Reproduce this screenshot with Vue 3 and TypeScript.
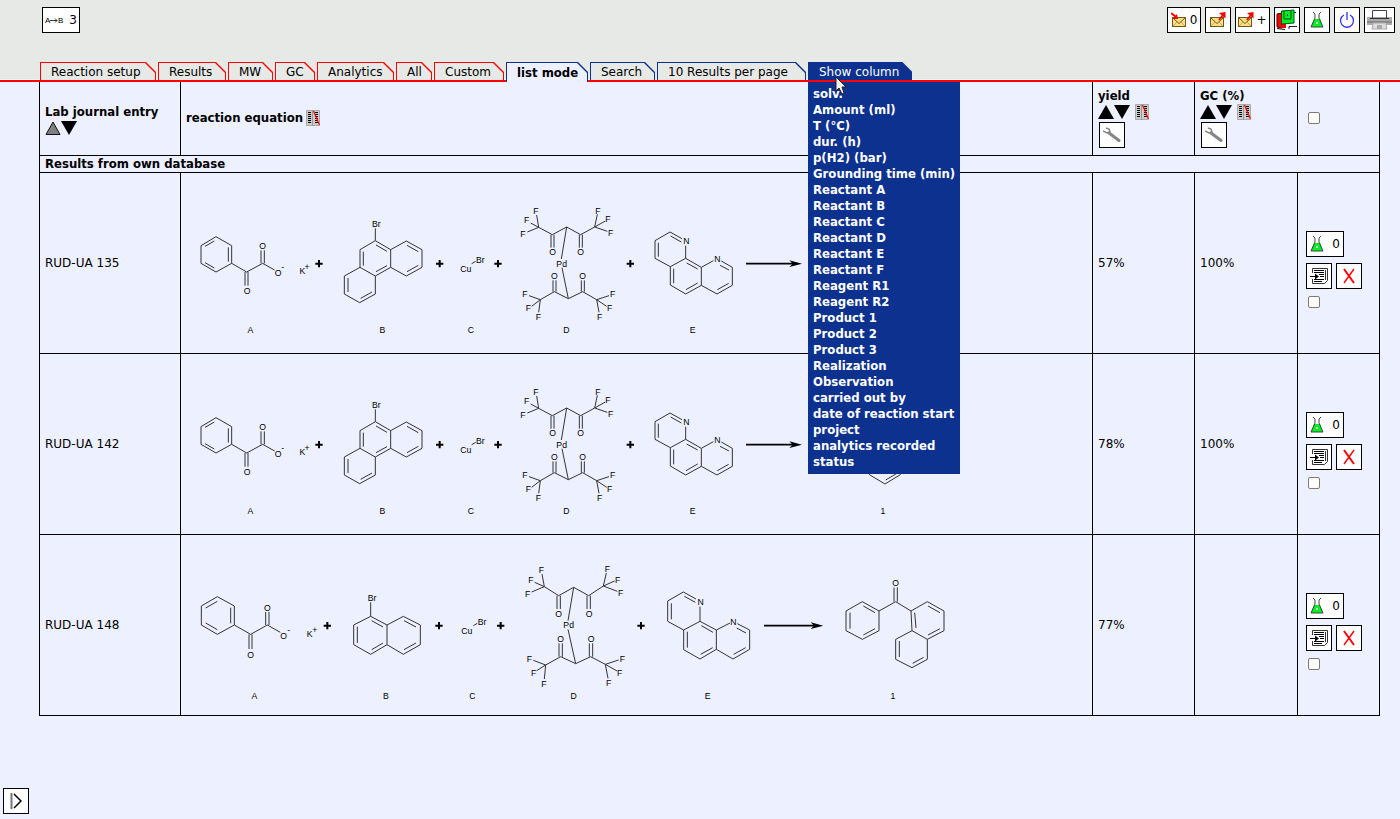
<script setup lang="ts">
import { ref } from 'vue'

type Label = [text: string, x: number, y: number]
interface Part {
  dx: number
  dy: number
  bonds: string
  atoms: Label[]
}
interface Scheme {
  parts: Part[]
  pluses: [number, number][]
  arrow: [from: number, to: number, y: number]
}
interface Row {
  id: string
  gained: string
  gc: string
  scheme: Scheme
}
interface Tab {
  label: string
  tone: 'red' | 'blue'
  width: number
}

const tabs: Tab[] = [
  { label: 'Reaction setup', tone: 'red', width: 116 },
  { label: 'Results', tone: 'red', width: 68 },
  { label: 'MW', tone: 'red', width: 45 },
  { label: 'GC', tone: 'red', width: 40 },
  { label: 'Analytics', tone: 'red', width: 77 },
  { label: 'All', tone: 'red', width: 36 },
  { label: 'Custom', tone: 'red', width: 70 },
  { label: 'list mode', tone: 'blue', width: 82 },
  { label: 'Search', tone: 'blue', width: 65 },
  { label: '10 Results per page', tone: 'blue', width: 149 },
]
const active = ref('list mode')

const columns: string[] = [
  'solv.', 'Amount (ml)', 'T (°C)', 'dur. (h)', 'p(H2) (bar)', 'Grounding time (min)',
  'Reactant A', 'Reactant B', 'Reactant C', 'Reactant D', 'Reactant E', 'Reactant F',
  'Reagent R1', 'Reagent R2', 'Product 1', 'Product 2', 'Product 3', 'Realization',
  'Observation', 'carried out by', 'date of reaction start', 'project',
  'analytics recorded', 'status',
]

// Scheme coordinates are in thirds of a pixel.
const phenanthrene: Scheme = {
  parts: [
    {
      dx: 0, dy: 66,
      bonds: 'M93 125L140 152V205L93 231L48 205V152ZM88 138L60 154M130 157V200M60 203L88 219M140 205L185 231L233 205L269 225M180 231V272M189 231V272M228 205V166M238 205V166'
        + 'M571 100V137M571 137L617 164V217L571 243L525 217V164ZM573 150L606 169M535 170V212M573 230L606 212M617 164L664 138L711 164V217L664 243L617 217M666 151L700 170M666 230L700 211M525 217L478 243V297L524 323L571 297V243M489 249V291M527 310L561 291',
      atoms: [['O', 186, 287], ['O', 233, 153], ['O', 279, 233], ['-', 293, 217], ['K', 352, 228], ['+', 366, 215], ['A', 196, 405], ['Br', 574, 87], ['B', 592, 405]],
    },
    {
      dx: 765, dy: 66,
      bonds: 'M95 206L107 199'
        + 'M290 60L296 97M272 84L296 97M262 111L296 97L337 119L380 96L422 119L464 96M333 119V158M342 119V158M418 119V158M427 119V158M472 58L464 96L496 78M464 96L502 109M380 96L364 192'
        + 'M366 218L385 311M267 302L301 314M275 334L301 314M296 352L301 314L343 290L385 311L428 290L470 314M339 290V256M348 290V256M424 290V256M433 290V256M507 302L470 314L500 334M477 352L470 314'
        + 'M726 131L690 111L645 137V190L691 215L737 190V152M655 143V185M692 123L724 141M737 190L784 217V271L737 297L691 270V215M701 221V265M738 284L773 264M740 204L773 222M784 217L820 197M844 198L877 217V271L831 297L784 271M840 211L867 225M832 284L866 265',
      atoms: [['Cu', 77, 221], ['Br', 121, 195], ['C', 93, 405], ['F', 288, 48], ['F', 260, 76], ['F', 249, 117], ['F', 474, 47], ['F', 504, 73], ['F', 512, 114], ['O', 338, 172], ['O', 422, 172], ['Pd', 365, 206], ['O', 343, 243], ['O', 428, 243], ['F', 255, 298], ['F', 265, 340], ['F', 295, 366], ['F', 518, 298], ['F', 509, 340], ['F', 479, 366], ['D', 379, 405], ['N', 739, 139], ['N', 832, 193], ['E', 758, 405]],
    },
  ],
  pluses: [[402, 272], [764, 272], [939, 272], [1336, 272]],
  arrow: [1683, 1851, 272],
}

const phenanthreneWithProduct: Scheme = {
  ...phenanthrene,
  parts: [
    ...phenanthrene.parts,
    {
      dx: 1875, dy: 288,
      bonds: 'M225 -6L271 20V74L225 102L178 74V20ZM227 90L261 70M189 26V68M225 -6V-60L271 -87L318 -60V-6L271 20M271 -87V-141L318 -168L364 -141V-87L318 -60M225 -60L178 -87L131 -60V-6L85 20L38 -6V-60L85 -87L131 -60M173 -87V-126M183 -87V-126',
      atoms: [['1', 219, 183]],
    },
  ],
}

const naphthalene: Scheme = {
  parts: [
    {
      dx: 0, dy: 75,
      bonds: 'M97 110L148 138V195L97 223L49 195V138ZM97 124L62 144M137 143V190M62 189L97 209M148 195L197 223L247 195L286 217M192 223V267M201 223V267M242 195V156M252 195V156'
        + 'M557 127V169M557 169L606 195V254L557 283L506 254V195ZM517 200V249M560 182L594 201M560 269L594 249M606 195L655 169L706 195V254L655 283L606 254M657 182L693 201M657 269L693 249',
      atoms: [['O', 197, 284], ['O', 247, 143], ['O', 296, 229], ['-', 311, 209], ['K', 374, 222], ['+', 389, 209], ['A', 208, 409], ['Br', 561, 114], ['B', 603, 409]],
    },
    {
      dx: 765, dy: 75,
      bonds: 'M100 197L112 190'
        + 'M306 42L313 80M284 67L313 80M275 96L313 80L356 107L401 82L446 107L490 78M351 107V147M361 107V147M441 107V147M451 107V147M499 39L490 78L524 63M490 78L532 94M401 82L384 182'
        + 'M384 208L407 311M280 301L317 315M290 332L317 315M313 357L317 315L362 290L407 311L452 290L496 313M357 290V250M367 290V250M448 290V250M458 290V250M536 300L496 313L531 333M504 355L496 313'
        + 'M768 117L730 96L683 123V184L731 210L780 184V140M694 130V178M733 109L766 127M780 184L829 210V268L780 297L731 269V210M742 215V263M782 283L818 263M784 197L819 217M829 210L870 189M892 191L929 210V268L879 297L829 268M890 204L918 219M881 283L917 263',
      atoms: [['Cu', 80, 213], ['Br', 126, 185], ['C', 97, 409], ['F', 304, 30], ['F', 273, 59], ['F', 263, 102], ['F', 502, 27], ['F', 533, 59], ['F', 542, 99], ['O', 356, 161], ['O', 447, 161], ['Pd', 386, 196], ['O', 362, 236], ['O', 453, 236], ['F', 268, 298], ['F', 281, 339], ['F', 312, 371], ['F', 547, 296], ['F', 539, 339], ['F', 506, 369], ['D', 401, 409], ['N', 782, 126], ['N', 880, 185], ['E', 803, 409]],
    },
    {
      dx: 1875, dy: -255,
      bonds: 'M157 455L207 483V542L157 568L108 542V483ZM160 468L195 488M160 555L195 536M120 488V536M207 483L257 455L303 483M252 455V412M262 455V412M303 483L352 455L402 483V542L352 568L306 542ZM354 468L390 488M354 555L390 536M314 488L318 534M306 542L257 568V628L306 653L352 628V568M268 573V621M308 640L341 622',
      atoms: [['O', 257, 400], ['1', 249, 739]],
    },
  ],
  pluses: [[427, 272], [762, 272], [947, 272], [1368, 272]],
  arrow: [1737, 1915, 272],
}

const rows: Row[] = [
  { id: 'RUD-UA 135', gained: '57%', gc: '100%', scheme: phenanthrene },
  { id: 'RUD-UA 142', gained: '78%', gc: '100%', scheme: phenanthreneWithProduct },
  { id: 'RUD-UA 148', gained: '77%', gc: '', scheme: naphthalene },
]
</script>

<template>
  <div class="page">
    <header class="top">
      <div class="toolbar">
        <button class="box wide" aria-label="Reactions">
          <svg width="19" height="10" viewBox="0 0 19 10">
            <text x="0" y="8" class="tiny">A</text>
            <text x="13" y="8" class="tiny">B</text>
            <path d="M5 5.500H12M10 3.500L12 5.500L10 7.500" fill="none" stroke="#333" />
          </svg>
          <span>3</span>
        </button>
        <div class="tools">
          <button class="box inbox" aria-label="Inbox">
            <svg width="16" height="16" viewBox="0 0 16 16">
              <rect x="1.500" y="5.500" width="13" height="9" fill="#ffe080" stroke="#6b5a20" />
              <path d="M2 6L8 11.500L14 6" fill="none" stroke="#6b5a20" />
              <path d="M2 14L6 10M14 14L10 10" stroke="#c8a850" />
              <path d="M0 1L5 5" stroke="#f00" stroke-width="2" /><path d="M7 7H1.500L6 2Z" fill="#f00" />
            </svg>
            <span>0</span>
          </button>
          <button class="box" aria-label="Send">
            <svg width="16" height="16" viewBox="0 0 16 16">
              <rect x="0.500" y="5.500" width="13" height="9" fill="#ffe080" stroke="#6b5a20" />
              <path d="M1 6L7 11.500L13 6" fill="none" stroke="#6b5a20" />
              <path d="M1 14L5 10M13 14L9 10" stroke="#c8a850" />
              <path d="M9 8L13 3" stroke="#f00" stroke-width="2" /><path d="M15.500 0V6.500L9 1Z" fill="#f00" />
            </svg>
          </button>
          <button class="box plus" aria-label="Send and add">
            <svg width="16" height="16" viewBox="0 0 16 16">
              <rect x="0.500" y="5.500" width="13" height="9" fill="#ffe080" stroke="#6b5a20" />
              <path d="M1 6L7 11.500L13 6" fill="none" stroke="#6b5a20" />
              <path d="M1 14L5 10M13 14L9 10" stroke="#c8a850" />
              <path d="M9 8L13 3" stroke="#f00" stroke-width="2" /><path d="M15.500 0V6.500L9 1Z" fill="#f00" />
            </svg>
            <span>+</span>
          </button>
          <button class="box" aria-label="Journals">
            <svg width="22" height="22" viewBox="0 0 22 22">
              <path d="M16 3.500H20M16 17.500H21" stroke="#222" />
              <path d="M1 5L6 4V19L1 18Z" fill="#f00" stroke="#400" />
              <path d="M6 15H10V19H5Z" fill="#f00" />
              <path d="M1 19.500L9 20.500M13 20V17.500H16" fill="none" stroke="#111" />
              <path d="M5.500 2L18 1V14L5.500 15Z" fill="#0e2" stroke="#052" />
              <path d="M8 2V10H15V2M11.500 5V7" fill="none" stroke="#042" />
            </svg>
          </button>
          <button class="box" aria-label="Chemicals">
            <svg width="14" height="16" viewBox="0 0 14 16">
              <path d="M4 7L1 15H13L10 7Z" fill="#0e2" />
              <path d="M3 0L5 2V6L1 15H13L9 6V2L11 0" fill="none" stroke="#444" />
              <circle cx="7" cy="11" r="1" fill="#efe" />
            </svg>
          </button>
          <button class="box" aria-label="Log out">
            <svg width="16" height="18" viewBox="0 0 16 18">
              <path d="M5 4A6.500 6.500 0 1 0 11 4M8 1V9" fill="none" stroke="#33f" stroke-width="1.300" />
            </svg>
          </button>
          <button class="box print" aria-label="Print">
            <svg width="25" height="20" viewBox="0 0 25 20">
              <path d="M0 7H25V15H0Z" fill="#aaa" /><path d="M0 11H25V13H0Z" fill="#888" />
              <path d="M5.500 0.500H19.500V8H5.500Z" fill="#fff" stroke="#444" />
              <path d="M3 8.500H22" stroke="#333" />
              <path d="M6 13H19L20 19H5Z" fill="#ddd" stroke="#aaa" /><path d="M10 15H15V19H10Z" fill="#aaa" />
            </svg>
          </button>
        </div>
      </div>

      <nav class="tabs">
        <button
          v-for="tab in tabs"
          :key="tab.label"
          class="tab"
          :class="[tab.tone, { active: tab.label === active }]"
          :style="{ width: `${tab.width}px` }"
          @click="active = tab.label"
        >
          <span>{{ tab.label }}</span>
        </button>
        <div class="dropdown">
          <button class="tab filled" aria-haspopup="true"><span>Show column</span></button>
          <ul class="menu">
            <li v-for="column in columns" :key="column"><a href="#">{{ column }}</a></li>
          </ul>
          <svg class="pointer" width="13" height="19" viewBox="0 0 13 19">
            <path d="M1 1V15L4 12L7 18L9 17L7 11H11Z" fill="#f4f4f4" stroke="#222" />
          </svg>
        </div>
      </nav>
    </header>

    <main class="content">
      <table class="results">
        <colgroup>
          <col class="c-entry" /><col /><col class="c-yield" /><col class="c-gc" /><col class="c-actions" />
        </colgroup>
        <thead>
          <tr>
            <th scope="col" class="journal">
              <div>Lab journal entry</div>
              <div class="sort">
                <button class="bare" aria-label="Sort ascending"><svg width="16" height="14" viewBox="0 0 16 14"><path d="M8 1L15 13.500H1Z" fill="#808080" stroke="#111" /></svg></button>
                <button class="bare" aria-label="Sort descending"><svg width="16" height="14" viewBox="0 0 16 14"><path d="M0 0H16L8 14Z" /></svg></button>
              </div>
            </th>
            <th scope="col">
              <div class="inline">
                <span>reaction equation</span>
                <button class="bare" aria-label="Hide column">
                  <svg width="14" height="16" viewBox="0 0 14 16">
                    <path d="M0.500 0.500H13.500V15.500H0.500Z" fill="#ccc" stroke="#aaa" /><path d="M6.500 0V16" stroke="#999" />
                    <path d="M2 2.500H5M2 4.500H5M2 6.500H5M2 8.500H5M2 10.500H5M2 12.500H5M9 2.500H12M9 4.500H12M9 6.500H12M9 8.500H12M9 10.500H12M9 12.500H12" stroke="#000" />
                    <path d="M7.500 1L13.500 15" stroke="#f00" stroke-width="1.200" />
                  </svg>
                </button>
              </div>
            </th>
            <th v-for="name in ['yield', 'GC (%)']" :key="name" scope="col">
              <div>{{ name }}</div>
              <div class="sort">
                <button class="bare" aria-label="Sort ascending"><svg width="16" height="14" viewBox="0 0 16 14"><path d="M8 0L16 14H0Z" /></svg></button>
                <button class="bare" aria-label="Sort descending"><svg width="16" height="14" viewBox="0 0 16 14"><path d="M0 0H16L8 14Z" /></svg></button>
                <button class="bare hide" aria-label="Hide column">
                  <svg width="14" height="16" viewBox="0 0 14 16">
                    <path d="M0.500 0.500H13.500V15.500H0.500Z" fill="#ccc" stroke="#aaa" /><path d="M6.500 0V16" stroke="#999" />
                    <path d="M2 2.500H5M2 4.500H5M2 6.500H5M2 8.500H5M2 10.500H5M2 12.500H5M9 2.500H12M9 4.500H12M9 6.500H12M9 8.500H12M9 10.500H12M9 12.500H12" stroke="#000" />
                    <path d="M7.500 1L13.500 15" stroke="#f00" stroke-width="1.200" />
                  </svg>
                </button>
              </div>
              <button class="box wrench" aria-label="Configure column">
                <svg width="18" height="16" viewBox="0 0 18 16">
                  <path d="M6 6L16 13.500" stroke="#858585" stroke-width="3" stroke-linecap="round" />
                  <path d="M3 1L6 2L7 5L4 6L0 4" fill="none" stroke="#858585" stroke-width="1.500" />
                </svg>
              </button>
            </th>
            <th><input type="checkbox" class="check" aria-label="Select all" /></th>
          </tr>
        </thead>
        <tbody>
          <tr class="group"><th colspan="5" scope="colgroup">Results from own database</th></tr>
          <tr v-for="row in rows" :key="row.id" class="entry">
            <td>{{ row.id }}</td>
            <td>
              <svg class="scheme" viewBox="3 0 2340 540" role="img" aria-label="Reaction scheme">
                <g v-for="(part, i) in row.scheme.parts" :key="i" :transform="`translate(${part.dx} ${part.dy})`">
                  <path :d="part.bonds" class="bond" />
                  <text v-for="([text, x, y], n) in part.atoms" :key="n" :x="x" :y="y + 9" class="atom">{{ text }}</text>
                </g>
                <path
                  v-for="([x, y], n) in row.scheme.pluses"
                  :key="`p${n}`"
                  :d="`M${x - 11} ${y}h22M${x} ${y - 11}v22`"
                  class="plus-sign"
                />
                <path :d="`M${row.scheme.arrow[0]} ${row.scheme.arrow[2]}H${row.scheme.arrow[1] - 20}`" class="shaft" />
                <path :d="`M${row.scheme.arrow[1]} ${row.scheme.arrow[2]}l-38 -10l10 10l-10 10z`" />
              </svg>
            </td>
            <td>{{ row.gained }}</td>
            <td>{{ row.gc }}</td>
            <td class="actions">
              <button class="box wide flask" aria-label="Chemicals">
                <svg width="14" height="16" viewBox="0 0 14 16">
                  <path d="M4 7L1 15H13L10 7Z" fill="#0e2" />
                  <path d="M3 0L5 2V6L1 15H13L9 6V2L11 0" fill="none" stroke="#444" />
                  <circle cx="7" cy="11" r="1" fill="#efe" />
                </svg>
                <span>0</span>
              </button>
              <div class="pair">
                <button class="box" aria-label="Open entry">
                  <svg width="18" height="18" viewBox="0 0 18 18">
                    <path d="M2.500 6V1.500H17.500V13.500L14.500 16.500H2.500V12M15.500 3V13" fill="none" stroke="#333" />
                    <path d="M4 3.500H14M4 5.500H14M9 7.500H14M10 9.500H14M4 12.500H14M4 14.500H12" stroke="#000" />
                    <path d="M0 9.500H8" stroke="#000" /><path d="M5 6.500L9 9.500L5 12.500Z" />
                  </svg>
                </button>
                <button class="box" aria-label="Delete entry">
                  <svg width="14" height="16" viewBox="0 0 14 16">
                    <path d="M2 1L12 15" stroke="#f00" stroke-width="2" /><path d="M12 1L2 15" stroke="#f00" stroke-width="1.400" />
                  </svg>
                </button>
              </div>
              <input type="checkbox" class="check" :aria-label="`Select ${row.id}`" />
            </td>
          </tr>
        </tbody>
      </table>
    </main>

    <footer class="foot">
      <button class="box" aria-label="Expand sidebar">
        <svg width="12" height="18" viewBox="0 0 12 18"><path d="M1.500 1V17" stroke="#777" stroke-width="2" /><path d="M4 2L11 9L4 16" fill="none" stroke="#000" stroke-width="1.500" /></svg>
      </button>
    </footer>
  </div>
</template>

<style>
body {
  margin: 0;
  background: #edf0ff;
}
</style>

<style scoped>
.page {
  display: flex;
  flex-direction: column;
  min-height: 100vh;
  font: 12px/16px "DejaVu Sans", Verdana, sans-serif;
  color: #000;
}
.top {
  background: #e7e9e6;
  border-bottom: 2px solid #f00;
}
.toolbar {
  display: flex;
  justify-content: space-between;
  padding: 7px 5px 29px 42px;
}
.tools {
  display: flex;
  gap: 4px;
}
.box {
  display: flex;
  align-items: center;
  justify-content: center;
  box-sizing: border-box;
  width: 26px;
  height: 26px;
  padding: 0;
  border: 1px solid #000;
  background: #fff;
  color: #000;
  font: inherit;
}
.wide {
  width: 38px;
  gap: 5px;
}
.flask {
  gap: 8px;
}
.inbox {
  width: 34px;
  gap: 3px;
}
.plus {
  width: 35px;
  gap: 2px;
}
.print {
  width: 31px;
}
.tiny {
  font: 8px "Liberation Sans", sans-serif;
}
.tabs {
  display: flex;
  gap: 2px;
  padding-left: 40px;
  box-shadow: inset 0 -1px #fff;
}
.tab {
  --edge: #f00;
  --fill: #e7e9e6;
  position: relative;
  display: block;
  box-sizing: border-box;
  height: 18px;
  padding: 0 0 0 11px;
  border: 0;
  background: var(--edge);
  clip-path: polygon(0 0, calc(100% - 10px) 0, 100% 10px, 100% 100%, 0 100%);
  color: #000;
  font: inherit;
  line-height: 21px;
  text-align: left;
  white-space: nowrap;
}
.tab::before {
  content: "";
  position: absolute;
  inset: 1px 1px 0 1px;
  background: var(--fill);
  clip-path: polygon(0 0, calc(100% - 10px) 0, 100% 10px, 100% 100%, 0 100%);
}
.tab span {
  position: relative;
}
.blue {
  --edge: #0d318f;
}
.active {
  --fill: #edf0ff;
  height: 20px;
  margin-bottom: -2px;
  font-family: "DejaVu Sans Condensed", "DejaVu Sans", sans-serif;
  font-size: 13px;
  font-weight: bold;
}
.filled {
  --edge: #0d318f;
  --fill: #0d318f;
  padding-right: 13px;
  color: #fff;
}
.dropdown {
  position: relative;
}
.menu {
  position: absolute;
  z-index: 2;
  top: 20px;
  left: 0;
  margin: 0;
  padding: 4px 5px;
  background: #0d318f;
  list-style: none;
  white-space: nowrap;
  font: bold 13px/16px "DejaVu Sans Condensed", "DejaVu Sans", sans-serif;
}
.menu li {
  height: 16px;
}
.menu a {
  color: #fff;
  text-decoration: none;
}
.pointer {
  position: absolute;
  z-index: 3;
  top: 14px;
  left: 27px;
}
.content {
  padding: 0 20px 0 39px;
}
.results {
  width: 100%;
  table-layout: fixed;
  border-collapse: collapse;
}
.c-entry {
  width: 141px;
}
.c-yield {
  width: 102px;
}
.c-gc {
  width: 103px;
}
.c-actions {
  width: 82px;
}
th,
td {
  box-sizing: border-box;
  padding: 0 5px;
  border: 1px solid #000;
  text-align: left;
  vertical-align: middle;
}
th {
  font: bold 13px/16px "DejaVu Sans Condensed", "DejaVu Sans", sans-serif;
}
thead th {
  height: 73px;
  border-top: 0;
}
thead .journal {
  padding-top: 3px;
}
.group th {
  height: 17px;
}
.entry td {
  height: 181px;
}
.bare {
  display: block;
  padding: 0;
  border: 0;
  background: none;
}
.bare svg {
  display: block;
}
.sort {
  display: flex;
  align-items: center;
  height: 16px;
}
.hide {
  margin-left: 5px;
}
.inline {
  display: flex;
  align-items: center;
  gap: 3px;
}
.wrench {
  margin: 2px 0 0 1px;
}
.check {
  display: block;
  box-sizing: border-box;
  width: 12px;
  height: 12px;
  margin: 0 0 0 5px;
  appearance: none;
  border: 1px solid #84796b;
  border-radius: 2px;
  background: #fff;
}
.actions .box {
  margin-left: 3px;
}
.entry .actions {
  padding-top: 14px;
}
.pair {
  display: flex;
  gap: 1px;
  margin: 6px 0 7px;
}
.scheme {
  display: block;
  width: 780px;
  max-width: 100%;
}
.bond {
  fill: none;
  stroke: #333;
  stroke-width: 3;
}
.plus-sign {
  stroke: #000;
  stroke-width: 6;
}
.shaft {
  stroke: #000;
  stroke-width: 5;
}
.atom {
  font: 26px "Liberation Sans", Arial, sans-serif;
  text-anchor: middle;
}
.foot {
  margin-top: auto;
  padding: 5px 3px;
}
</style>
